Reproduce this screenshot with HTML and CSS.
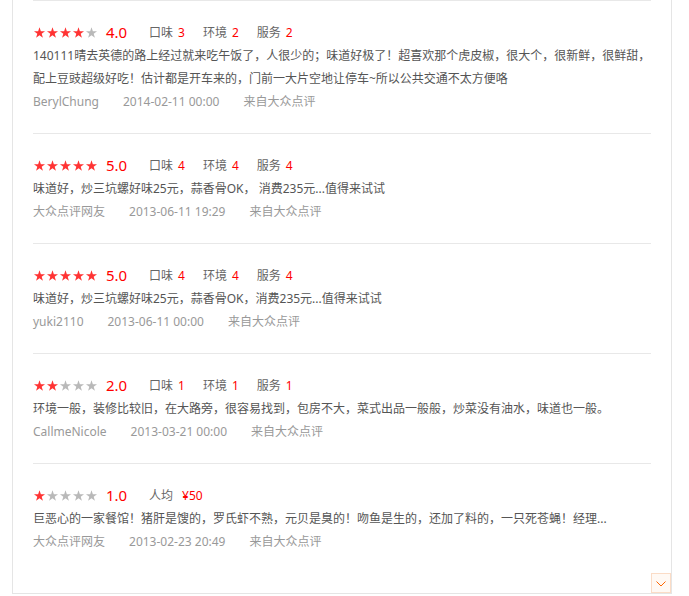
FILE: index.html
```html
<!DOCTYPE html>
<html lang="zh-CN">
<head>
<meta charset="utf-8">
<title>评论</title>
<link rel="stylesheet" href="styles.css">
</head>
<body>
<svg class="defs" width="0" height="0" aria-hidden="true">
  <defs>
    <symbol id="star" viewBox="0 0 13 13">
      <polygon points="6.5,1.2 7.85,5.14 12.02,5.21 8.69,7.71 9.91,11.69 6.5,9.3 3.09,11.69 4.31,7.71 0.98,5.21 5.15,5.14"/>
    </symbol>
  </defs>
</svg>
<div class="panel">
  <ul class="reviews">
    <li class="review">
      <div class="head">
        <span class="stars">
          <svg class="star on"><use href="#star"/></svg><svg class="star on"><use href="#star"/></svg><svg class="star on"><use href="#star"/></svg><svg class="star on"><use href="#star"/></svg><svg class="star"><use href="#star"/></svg>
        </span>
        <span class="score">4.0</span>
        <span class="item">口味<em>3</em></span>
        <span class="item">环境<em>2</em></span>
        <span class="item">服务<em>2</em></span>
      </div>
      <p class="text">140111晴去英德的路上经过就来吃午饭了，人很少的；味道好极了！超喜欢那个虎皮椒，很大个，很新鲜，很鲜甜，<br>配上豆豉超级好吃！估计都是开车来的，门前一大片空地让停车~所以公共交通不太方便咯</p>
      <div class="meta"><span>BerylChung</span><span>2014-02-11 00:00</span><span>来自大众点评</span></div>
    </li>
    <li class="review">
      <div class="head">
        <span class="stars">
          <svg class="star on"><use href="#star"/></svg><svg class="star on"><use href="#star"/></svg><svg class="star on"><use href="#star"/></svg><svg class="star on"><use href="#star"/></svg><svg class="star on"><use href="#star"/></svg>
        </span>
        <span class="score">5.0</span>
        <span class="item">口味<em>4</em></span>
        <span class="item">环境<em>4</em></span>
        <span class="item">服务<em>4</em></span>
      </div>
      <p class="text">味道好，炒三坑螺好味25元，蒜香骨OK， 消费235元...值得来试试</p>
      <div class="meta"><span>大众点评网友</span><span>2013-06-11 19:29</span><span>来自大众点评</span></div>
    </li>
    <li class="review">
      <div class="head">
        <span class="stars">
          <svg class="star on"><use href="#star"/></svg><svg class="star on"><use href="#star"/></svg><svg class="star on"><use href="#star"/></svg><svg class="star on"><use href="#star"/></svg><svg class="star on"><use href="#star"/></svg>
        </span>
        <span class="score">5.0</span>
        <span class="item">口味<em>4</em></span>
        <span class="item">环境<em>4</em></span>
        <span class="item">服务<em>4</em></span>
      </div>
      <p class="text">味道好，炒三坑螺好味25元，蒜香骨OK，消费235元...值得来试试</p>
      <div class="meta"><span>yuki2110</span><span>2013-06-11 00:00</span><span>来自大众点评</span></div>
    </li>
    <li class="review">
      <div class="head">
        <span class="stars">
          <svg class="star on"><use href="#star"/></svg><svg class="star on"><use href="#star"/></svg><svg class="star"><use href="#star"/></svg><svg class="star"><use href="#star"/></svg><svg class="star"><use href="#star"/></svg>
        </span>
        <span class="score">2.0</span>
        <span class="item">口味<em>1</em></span>
        <span class="item">环境<em>1</em></span>
        <span class="item">服务<em>1</em></span>
      </div>
      <p class="text">环境一般，装修比较旧，在大路旁，很容易找到，包房不大，菜式出品一般般，炒菜没有油水，味道也一般。</p>
      <div class="meta"><span>CallmeNicole</span><span>2013-03-21 00:00</span><span>来自大众点评</span></div>
    </li>
    <li class="review">
      <div class="head">
        <span class="stars">
          <svg class="star on"><use href="#star"/></svg><svg class="star"><use href="#star"/></svg><svg class="star"><use href="#star"/></svg><svg class="star"><use href="#star"/></svg><svg class="star"><use href="#star"/></svg>
        </span>
        <span class="score">1.0</span>
        <span class="item">人均<em class="price">¥50</em></span>
      </div>
      <p class="text">巨恶心的一家餐馆！猪肝是馊的，罗氏虾不熟，元贝是臭的！吻鱼是生的，还加了料的，一只死苍蝇！经理...</p>
      <div class="meta"><span>大众点评网友</span><span>2013-02-23 20:49</span><span>来自大众点评</span></div>
    </li>
  </ul>
  <a class="more" href="#" aria-label="展开">
    <svg width="10" height="6" viewBox="0 0 10 6"><polyline points="0.5,0.5 5,5 9.5,0.5" fill="none" stroke="#f60" stroke-width="1"/></svg>
  </a>
</div>
</body>
</html>
```
FILE: styles.css
```css
html, body {
  margin: 0;
  padding: 0;
  background: #fff;
}
body {
  font-family: "Noto Sans", "Noto Sans CJK SC", sans-serif;
  font-size: 12px;
  color: #555;
}
.defs {
  position: absolute;
  width: 0;
  height: 0;
  overflow: hidden;
}
.panel {
  position: relative;
  width: 618px;
  margin-left: 12px;
  padding: 0 20px 20px;
  border: 1px solid #e5e5e5;
  border-top: 0;
}
.reviews {
  list-style: none;
  margin: 0;
  padding: 0;
}
.review {
  border-top: 1px solid #e8e8e8;
  padding: 20px 0 20px;
}
.head {
  display: flex;
  align-items: center;
  height: 23px;
  line-height: 23px;
}
.stars {
  display: flex;
  width: 65px;
}
.star {
  width: 13px;
  height: 13px;
  fill: #b9b9b9;
}
.star.on {
  fill: #f33;
}
.score {
  margin-left: 8px;
  width: 43px;
  font-size: 15px;
  color: #f00;
}
.item {
  margin-right: 18px;
  color: #666;
  font-size: 12px;
}
.item em {
  font-style: normal;
  color: #f00;
  margin-left: 5px;
}
.item em.price {
  margin-left: 9px;
}
.text {
  margin: 0 -10px 0 0;
  line-height: 23px;
  color: #555;
}
.meta {
  display: flex;
  line-height: 23px;
  color: #999;
}
.meta span {
  margin-right: 24px;
}
.more {
  position: absolute;
  right: 0;
  bottom: 0;
  width: 18px;
  height: 18px;
  border: 1px solid #fbdcc6;
  background: #fff9f4;
  display: flex;
  align-items: center;
  justify-content: center;
}
.more svg {
  margin-top: 2px;
}
```
